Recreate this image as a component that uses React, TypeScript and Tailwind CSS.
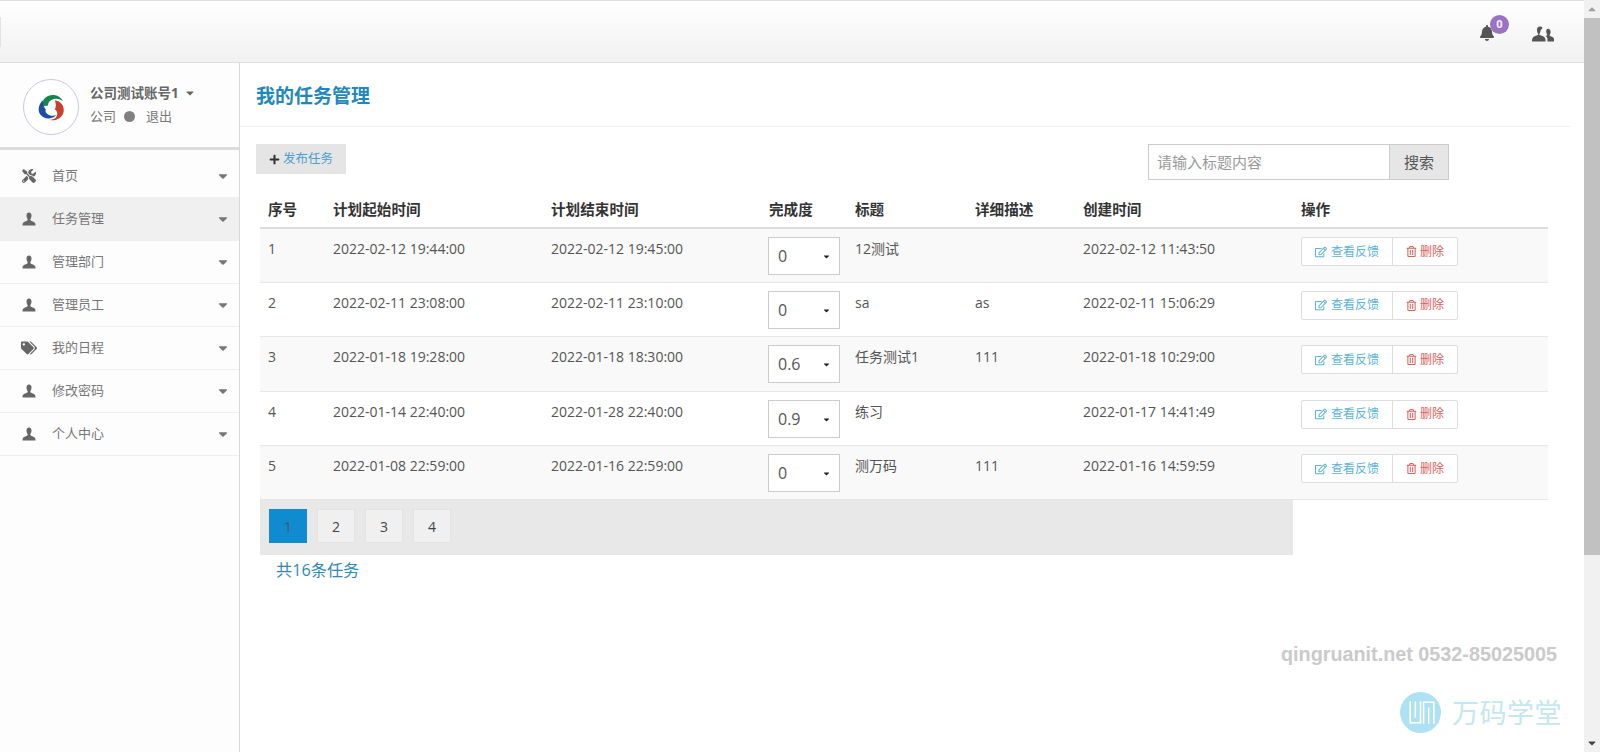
import React from 'react';
import { FaBell, FaCaretDown, FaCaretUp, FaPlus, FaRegEdit, FaRegTrashAlt, FaTags, FaTools } from 'react-icons/fa';

const UserIcon: React.FC<{ className?: string }> = ({ className }) => (
  <svg viewBox="0 0 14 14" className={className} fill="currentColor">
    <path d="M7 .5C5.500.5 4.500 1.700 4.500 3.500c0 1.300.5 2.700 1 3.500.3.5.2 1.200-.2 1.600-.9.7-3.300 1-4.300 2.400-.4.6-.5 1.400-.5 2.500h13c0-1.100-.1-1.900-.5-2.500-1-1.400-3.400-1.700-4.300-2.400-.4-.4-.5-1.100-.2-1.600.5-.8 1-2.200 1-3.500C9.500 1.700 8.500.5 7 .5z" />
  </svg>
);

const UsersIcon: React.FC<{ className?: string }> = ({ className }) => (
  <svg viewBox="0 0 22 16" className={className} fill="currentColor">
    <path d="M8 .5C6.100.5 4.900 2 4.900 4c0 1.400.6 2.900 1.200 3.800.3.5.2 1-.2 1.300-1.300.8-4.400 1.200-5.300 2.900-.4.8-.6 1.800-.6 3.500h13.500v-1.500c0-.8-.2-1.400-.5-2-.9-1.700-4-2.100-5.300-2.900-.4-.3-.5-.8-.2-1.300.6-.9 1.200-2.400 1.200-3.800C11.700 2 10 .5 8 .5z" />
    <path d="M16.500 2.500c-1.400 0-2.300 1.200-2.300 2.800 0 1.100.4 2.300.9 3 .2.400.2.800-.1 1-.4.300-.9.500-1.500.8 1.100.6 1.700 1.300 1.900 2.400v3h6.600v-2c0-.6-.1-1-.3-1.400-.7-1.300-3-1.700-3.900-2.400-.3-.2-.3-.6-.1-1 .5-.7.9-1.900.9-3 0-1.600-.9-2.800-2.100-2.800z" />
  </svg>
);

const SwirlLogo = () => (
  <svg viewBox="0 0 40 40" className="h-[30px] w-[30px]">
    <path d="M8 21C6 11 14 3 24 4c5 .5 9 3 12 8-5-3-10-4-14-2-4 1.500-6 4-6 8-3 0-6 1-8 3z" fill="#17864e" />
    <path d="M25 11c7 1 12 6 12 13 0 6-4 11-10 13-3 1-6 1-9 0 5 0 9-2 10-6 1-3 0-6-3-8 2-3 2-7 0-12z" fill="#c8402f" />
    <path d="M9 11c-5 5-7 12-4 18 3 5 9 7 14 6 3-.5 6-2 8-4-4 1-8 1-11-1-3-2-4-4-3-7-3-3-4-7-4-12z" fill="#1d4f9f" />
  </svg>
);

const MENU = [
  { label: '首页', icon: 'tools' },
  { label: '任务管理', icon: 'user', active: true },
  { label: '管理部门', icon: 'user' },
  { label: '管理员工', icon: 'user' },
  { label: '我的日程', icon: 'tags' },
  { label: '修改密码', icon: 'user' },
  { label: '个人中心', icon: 'user' },
];

const ROWS = [
  { id: 1, start: '2022-02-12 19:44:00', end: '2022-02-12 19:45:00', done: '0', title: '12测试', desc: '', created: '2022-02-12 11:43:50' },
  { id: 2, start: '2022-02-11 23:08:00', end: '2022-02-11 23:10:00', done: '0', title: 'sa', desc: 'as', created: '2022-02-11 15:06:29' },
  { id: 3, start: '2022-01-18 19:28:00', end: '2022-01-18 18:30:00', done: '0.6', title: '任务测试1', desc: '111', created: '2022-01-18 10:29:00' },
  { id: 4, start: '2022-01-14 22:40:00', end: '2022-01-28 22:40:00', done: '0.9', title: '练习', desc: '', created: '2022-01-17 14:41:49' },
  { id: 5, start: '2022-01-08 22:59:00', end: '2022-01-16 22:59:00', done: '0', title: '测万码', desc: '111', created: '2022-01-16 14:59:59' },
];

const HEADERS = ['序号', '计划起始时间', '计划结束时间', '完成度', '标题', '详细描述', '创建时间', '操作'];
const COL_WIDTHS = [65, 218, 218, 86, 120, 108, 218, 255];

const Sidebar = () => (
  <aside className="flex w-[240px] shrink-0 flex-col border-r border-[#d8d8d8] bg-[#fdfdfd]">
    <div className="flex h-[87px] items-start border-b-[3px] border-[#dcdcdc] pl-[23px] pt-[16px]">
      <div className="flex h-[56px] w-[56px] shrink-0 items-center justify-center rounded-full border border-[#c9c6e4] bg-white">
        <SwirlLogo />
      </div>
      <div className="ml-[11px] pt-[4px]">
        <div className="flex items-center text-[13.5px] font-bold leading-[20px] text-[#666]">
          公司测试账号1
          <FaCaretDown className="ml-[5px] text-[12px] text-[#666]" />
        </div>
        <div className="mt-[3px] flex items-center text-[13px] leading-[20px] text-[#777]">
          公司
          <span className="ml-[8px] h-[11px] w-[11px] rounded-full bg-[#808080]" />
          <span className="ml-[11px]">退出</span>
        </div>
      </div>
    </div>
    <nav className="pt-[5px]">
      {MENU.map(item => (
        <div
          key={item.label}
          className={`flex h-[43px] items-center border-b border-[#efefef] pl-[21px] pr-[9px] text-[13px] text-[#777] ${item.active ? 'bg-[#f0f0f0]' : ''}`}
        >
          <span className="flex w-[16px] justify-center text-[#666]">
            {item.icon === 'tools' && <FaTools className="text-[14px]" />}
            {item.icon === 'tags' && <FaTags className="text-[16px]" />}
            {item.icon === 'user' && <UserIcon className="h-[14px] w-[14px]" />}
          </span>
          <span className="ml-[15px] flex-1">{item.label}</span>
          <FaCaretDown className="text-[14px] text-[#777]" />
        </div>
      ))}
    </nav>
  </aside>
);

const ProgressSelect: React.FC<{ value: string }> = ({ value }) => (
  <div className="relative h-[38px] w-[72px]">
    <select
      defaultValue={value}
      className="h-full w-full appearance-none border border-[#ccc] bg-white pl-[9px] text-[16px] text-[#555] outline-none"
    >
      <option value={value}>{value}</option>
    </select>
    <FaCaretDown className="absolute right-[9px] top-[15px] text-[9px] text-[#222]" />
  </div>
);

const TaskTable = () => (
  <table className="ml-[20px] w-[1288px] table-fixed border-collapse text-[14px] text-[#555]">
    <colgroup>
      {COL_WIDTHS.map((w, i) => (
        <col key={i} style={{ width: w }} />
      ))}
    </colgroup>
    <thead>
      <tr className="h-[36px] border-b-2 border-[#ddd]">
        {HEADERS.map(h => (
          <th key={h} className="px-[8px] text-left align-middle text-[14.6px] font-bold text-[#333]">
            {h}
          </th>
        ))}
      </tr>
    </thead>
    <tbody>
      {ROWS.map((row, i) => (
        <tr key={row.id} className={`h-[54.4px] border-b border-[#e6e6e6] ${i % 2 === 0 ? 'bg-[#f9f9f9]' : 'bg-white'}`}>
          <td className="px-[8px] pt-[10px] align-top leading-[20px]">{row.id}</td>
          <td className="px-[8px] pt-[10px] align-top leading-[20px]">{row.start}</td>
          <td className="px-[8px] pt-[10px] align-top leading-[20px]">{row.end}</td>
          <td className="pl-[7px] pr-[8px] pt-[8px] align-top">
            <ProgressSelect value={row.done} />
          </td>
          <td className="px-[8px] pt-[10px] align-top leading-[20px]">{row.title}</td>
          <td className="px-[8px] pt-[10px] align-top leading-[20px]">{row.desc}</td>
          <td className="px-[8px] pt-[10px] align-top leading-[20px]">{row.created}</td>
          <td className="px-[8px] pt-[8px] align-top">
            <div className="flex h-[29px] w-[157px] rounded-[2px] border border-[#ddd] bg-white text-[12px]">
              <button className="flex w-[91px] items-center justify-center gap-[4px] border-r border-[#ddd] text-[#5bb4d6]">
                <FaRegEdit className="text-[12px]" />
                查看反馈
              </button>
              <button className="flex flex-1 items-center justify-center gap-[3px] text-[#d9605a]">
                <FaRegTrashAlt className="text-[11px]" />
                删除
              </button>
            </div>
          </td>
        </tr>
      ))}
    </tbody>
  </table>
);

const Pagination = () => (
  <div className="ml-[20px] flex h-[55px] w-[1033px] items-start gap-[10px] bg-[#e8e8e8] pl-[9px] pt-[9px]">
    {[1, 2, 3, 4].map(n => (
      <span
        key={n}
        className={`flex h-[34px] w-[38px] items-center justify-center text-[14px] ${n === 1 ? 'bg-[#0f8bd0] text-[#555]' : 'rounded-[2px] border border-[#e4e4e4] bg-[#f0f0f0] text-[#444]'}`}
      >
        {n}
      </span>
    ))}
  </div>
);

const Scrollbar = () => (
  <div className="flex w-[16px] shrink-0 flex-col items-center bg-[#f1f1f1]">
    <div className="flex h-[18px] items-center justify-center">
      <FaCaretUp className="text-[12px] text-[#a0a0a0]" />
    </div>
    <div className="h-[537px] w-full bg-[#c1c1c1]" />
    <div className="flex-1" />
    <div className="flex h-[18px] items-center justify-center">
      <FaCaretDown className="text-[12px] text-[#444]" />
    </div>
  </div>
);

export default function App() {
  return (
    <div className='relative flex h-[752px] w-full overflow-hidden bg-white font-["Open_Sans","Noto_Sans_CJK_SC",sans-serif]'>
      <div className="flex min-w-0 flex-1 flex-col">
        <header className="relative flex h-[63px] shrink-0 items-center justify-end border-y border-y-[#dedede] bg-gradient-to-b from-white to-[#f1f1f1] pr-[30px]">
          <div className="absolute left-0 top-[16px] h-[30px] w-[1px] bg-[#e2e2e2]" />
          <div className="relative mr-[37px] mt-[3px]">
            <FaBell className="text-[16px] text-[#555]" />
            <span className="absolute left-[11px] top-[-10px] flex h-[19px] w-[19px] items-center justify-center rounded-full bg-[#9b72c4] text-[11px] font-bold text-[#f3eef8]">
              0
            </span>
          </div>
          <UsersIcon className="mt-[4px] h-[16px] w-[22px] text-[#555]" />
        </header>
        <div className="flex min-h-0 flex-1">
          <Sidebar />
          <main className="min-w-0 flex-1">
            <div className="mr-[14px] flex h-[64px] items-center border-b border-[#f0f0f0] pl-[16px] pt-[3px]">
              <h1 className="text-[19px] font-bold text-[#1f88bf]">我的任务管理</h1>
            </div>
            <div className="flex h-[65px] items-start justify-between pl-[16px] pr-[135px] pt-[17px]">
              <button className="flex h-[30px] w-[90px] items-center justify-center gap-[3px] bg-[#e5e5e5] text-[12.5px] text-[#4a9ed0]">
                <FaPlus className="text-[11px] text-[#333]" />
                发布任务
              </button>
              <div className="flex h-[36px]">
                <input
                  placeholder="请输入标题内容"
                  className="h-full w-[241px] border border-r-0 border-[#ccc] bg-white px-[8px] text-[15px] outline-none placeholder:text-[#999]"
                />
                <button className="h-full w-[60px] border border-[#ccc] bg-[#e6e6e6] text-[15px] text-[#555]">搜索</button>
              </div>
            </div>
            <TaskTable />
            <Pagination />
            <p className="ml-[36px] mt-[4px] text-[16.2px] leading-[22px] text-[#2f88b8]">共16条任务</p>
          </main>
        </div>
      </div>
      <Scrollbar />
      {/* watermark */}
      <div className='absolute left-[1281px] top-[641px] font-["Liberation_Sans",sans-serif] text-[19.8px] font-bold leading-[26px] text-[#cacaca]'>
        qingruanit.net 0532-85025005
      </div>
      <div className="absolute left-[1400px] top-[692px] flex items-center">
        <svg viewBox="0 0 40 40" className="h-[41px] w-[41px]">
          <circle cx="20" cy="20" r="20" fill="#aee1f2" />
          <path d="M10 9v21h10V9M15 9v16M23 31V10h10v21M28 15v16" fill="none" stroke="#fff" strokeWidth="1.5" />
        </svg>
        <span className="ml-[11px] text-[27px] leading-[36px] tracking-[0.5px] text-[#c4e7f1]">万码学堂</span>
      </div>
    </div>
  );
}
